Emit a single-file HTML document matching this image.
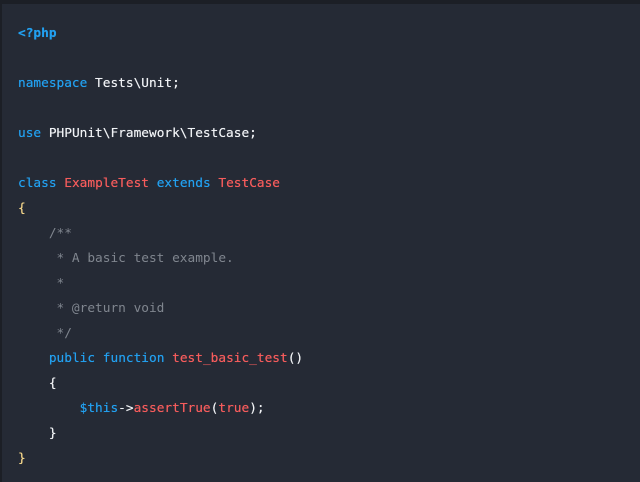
<!DOCTYPE html>
<html><head><style>
html,body{margin:0;padding:0;width:640px;height:482px;background:#1c1f26;overflow:hidden}
.p{position:absolute;left:2px;top:4px;width:638px;height:478px;background:#252a35}
pre{margin:0;position:absolute;left:16px;top:17px;font-family:"DejaVu Sans Mono","Liberation Mono",monospace;font-size:12.8px;line-height:25px;color:#f0f2f5;text-shadow:0 0 0.4px currentColor}
.k{color:#22a0f0}.r{color:#f65c5c}.c{color:#80868f;text-shadow:none}.y{color:#f3d58a}.b{font-weight:bold}
</style></head><body><div class="p"><pre><span class="k b">&lt;?php</span>

<span class="k">namespace</span> Tests\Unit;

<span class="k">use</span> PHPUnit\Framework\TestCase;

<span class="k">class</span> <span class="r">ExampleTest</span> <span class="k">extends</span> <span class="r">TestCase</span>
<span class="y">{</span>
    <span class="c">/**</span>
<span class="c">     * A basic test example.</span>
<span class="c">     *</span>
<span class="c">     * @return void</span>
<span class="c">     */</span>
    <span class="k">public</span> <span class="k">function</span> <span class="r">test_basic_test</span>()
    {
        <span class="k">$this</span>-&gt;<span class="r">assertTrue</span>(<span class="r">true</span>);
    }
<span class="y">}</span></pre></div></body></html>
